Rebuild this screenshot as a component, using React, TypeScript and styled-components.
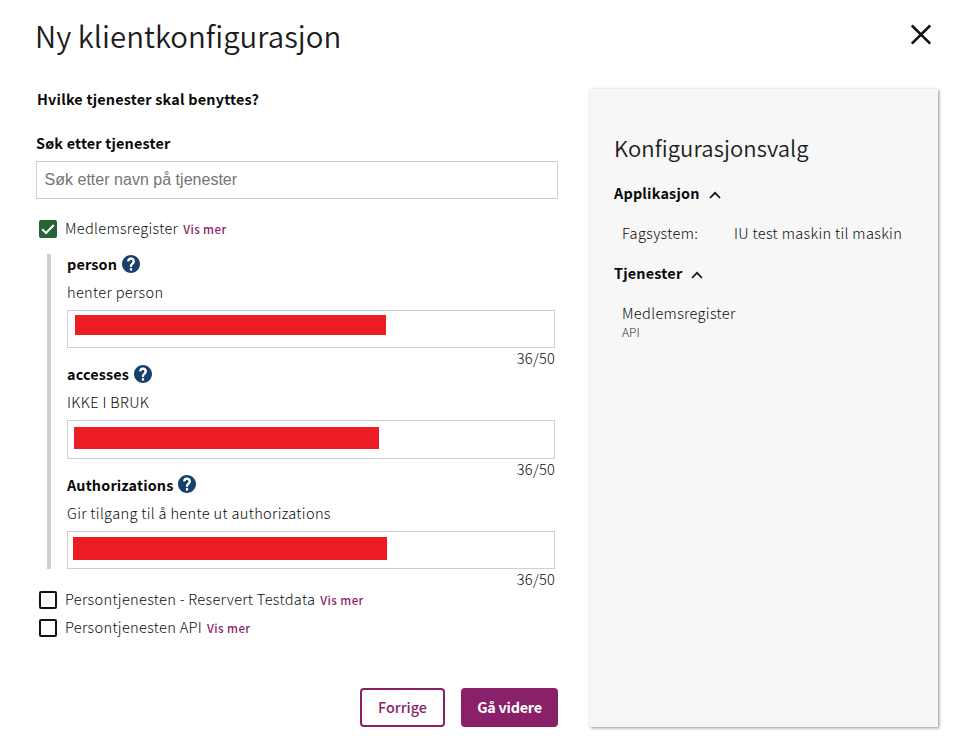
import React from "react";
import styled, { createGlobalStyle } from "styled-components";

const GlobalStyle = createGlobalStyle`
  *, *::before, *::after { box-sizing: border-box; }
  body {
    margin: 0;
    background: #fff;
    color: #0a0a0a;
    font-family: "Noto Sans CJK SC", "Noto Sans", sans-serif;
    font-size: 14.6px;
  }
  h1, h2, h3, p { margin: 0; font-weight: 400; }
`;

const Page = styled.main`
  width: 979px;
  height: 753px;
  overflow: hidden;
  padding: 15px 40px 0 36px;
`;

const Header = styled.header`
  display: flex;
  justify-content: space-between;
  height: 73px;
`;

const Title = styled.h1`
  margin: -2px 0 0 -1px;
  color: #1c1c1c;
  font-size: 29.4px;
  font-weight: 350;
  line-height: 44px;
  letter-spacing: 0.04px;
  white-space: nowrap;
`;

const CloseButton = styled.button`
  display: block;
  width: 36px;
  height: 36px;
  margin: 2px 0 0;
  padding: 0;
  border: 0;
  background: none;
`;

const Columns = styled.div`
  display: grid;
  grid-template-columns: 522px 348px;
  column-gap: 32px;
  align-items: start;
`;

const Form = styled.form`
  display: flex;
  flex-direction: column;
`;

const Question = styled.h2`
  margin-left: 1px;
  font-size: 14.4px;
  font-weight: 700;
  line-height: 22px;
  letter-spacing: 0.2px;
`;

const SearchLabel = styled.label`
  margin-top: 22px;
  font-size: 14.4px;
  font-weight: 700;
  line-height: 22px;
  letter-spacing: 0.17px;
`;

const SearchInput = styled.input`
  width: 100%;
  height: 38px;
  margin-top: 7px;
  padding: 0 7.5px;
  border: 1px solid #cfcfcf;
  font: 16px "Liberation Sans", Arial, sans-serif;
  letter-spacing: 0.02px;
  &::placeholder { color: #757575; opacity: 1; }
`;

const CheckRow = styled.div<{ $top: number }>`
  display: flex;
  align-items: center;
  height: 18px;
  margin-top: ${(p) => p.$top}px;
  padding-left: 3px;
  white-space: nowrap;
`;

const Box = styled.span<{ $checked?: boolean }>`
  display: flex;
  flex: none;
  width: 18px;
  height: 18px;
  border: 2px solid ${(p) => (p.$checked ? "#236534" : "#111")};
  border-radius: 2px;
  background: ${(p) => (p.$checked ? "#236534" : "#fff")};
`;

const CheckLabel = styled.span`
  margin: -2px 0 0 8px;
  font-weight: 300;
  line-height: 18px;
  letter-spacing: 0.31px;
`;

const MoreLink = styled.a`
  margin-left: 5px;
  color: #8a1f6a;
  font-size: 11.6px;
  font-weight: 500;
  line-height: 18px;
  letter-spacing: 0.4px;
`;

const ScopeGroup = styled.section`
  height: 315px;
  margin: 16px 3px 0 11px;
  padding-left: 16px;
  border-left: 4px solid #cfcfcf;
`;

const Scope = styled.div`
  height: 110.3px;
`;

const ScopeTitle = styled.h3`
  display: flex;
  align-items: center;
  height: 20px;
  font-size: 14.4px;
  font-weight: 700;
  line-height: 20px;
  letter-spacing: 0.15px;
`;

const HelpIcon = styled.svg`
  width: 18px;
  height: 18px;
  margin: 0 0 1px 4.5px;
`;

const ScopeText = styled.p`
  margin: 8px 0;
  font-weight: 300;
  line-height: 20px;
  letter-spacing: 0.33px;
`;

const ScopeField = styled.div<{ $top: number; $left: number; $height: number }>`
  height: ${(p) => p.$height}px;
  padding: ${(p) => p.$top}px 0 0 ${(p) => p.$left}px;
  border: 1px solid #cfcfcf;
`;

const Redaction = styled.div<{ $w: number; $h: number }>`
  width: ${(p) => p.$w}px;
  height: ${(p) => p.$h}px;
  background: #ed1c24;
`;

const Counter = styled.p`
  font-weight: 300;
  line-height: 20px;
  text-align: right;
  letter-spacing: 0.24px;
`;

const Actions = styled.div`
  display: flex;
  justify-content: flex-end;
  gap: 16px;
  margin-top: 51px;
`;

const Button = styled.button<{ $primary?: boolean }>`
  width: ${(p) => (p.$primary ? 97 : 85)}px;
  height: 39px;
  padding: 0 0 1px;
  border: 2px solid #8a1f6a;
  border-radius: 4px;
  background: ${(p) => (p.$primary ? "#8a1f6a" : "#fff")};
  color: ${(p) => (p.$primary ? "#fff" : "#8a1f6a")};
  font-family: inherit;
  font-size: 14.4px;
  font-weight: ${(p) => (p.$primary ? 700 : 500)};
  line-height: 34px;
  letter-spacing: ${(p) => (p.$primary ? -0.25 : 0)}px;
`;

const Summary = styled.aside`
  height: 638px;
  margin-top: 1px;
  padding: 41px 24px 0;
  background: #f7f7f7;
  box-shadow: 1px 1px 3px rgba(0, 0, 0, 0.45);
`;

const SummaryTitle = styled.h2`
  color: #1c1c1c;
  font-size: 22px;
  font-weight: 350;
  line-height: 34px;
  letter-spacing: 0.08px;
`;

const SummaryHeading = styled.h3<{ $top: number }>`
  display: flex;
  align-items: center;
  height: 20px;
  margin-top: ${(p) => p.$top}px;
  font-size: 14.4px;
  font-weight: 700;
  line-height: 20px;
  letter-spacing: 0.2px;
`;

const Chevron = styled.svg`
  width: 12px;
  height: 8px;
  margin: 3px 0 0 9px;
`;

const SummaryRow = styled.div`
  display: grid;
  grid-template-columns: 112px 1fr;
  margin: 20px 0 0 8px;
  font-weight: 300;
  line-height: 20px;
  letter-spacing: 0.34px;
  white-space: nowrap;
`;

const ServiceKind = styled.p`
  margin: 1px 0 0 8px;
  color: #333;
  font-size: 12px;
  font-weight: 300;
  line-height: 16px;
`;

const Help = () => (
  <HelpIcon viewBox="2 2 20 20">
    <path
      fill="#17406d"
      d="M12 2C6.48 2 2 6.48 2 12s4.48 10 10 10 10-4.48 10-10S17.52 2 12 2zm1 17h-2v-2h2v2zm2.07-7.75l-.9.92C13.45 12.9 13 13.5 13 15h-2v-.5c0-1.1.45-2.1 1.17-2.83l1.24-1.26c.37-.36.59-.86.59-1.41 0-1.1-.9-2-2-2s-2 .9-2 2H8c0-2.21 1.79-4 4-4s4 1.79 4 4c0 .88-.36 1.68-.93 2.25z"
    />
    <path
      fill="none"
      stroke="#fff"
      strokeWidth="2.5"
      d="M12 15v-.5c0-1 .4-1.6 1-2.2l1.2-1.2c.5-.5.8-1.2.8-2.1 0-1.6-1.3-3-3-3S9 7.400 9 9M12 16.800v2.400"
    />
  </HelpIcon>
);

const Caret = () => (
  <Chevron viewBox="0 0 12 8">
    <path d="M1 7 6 1.8 11 7" fill="none" stroke="#111" strokeWidth="1.7" />
  </Chevron>
);

const scopes = [
  { name: "person", text: "henter person", top: 4, left: 7, w: 311, h: 20, height: 38 },
  { name: "accesses", text: "IKKE I BRUK", top: 6, left: 6, w: 305, h: 22, height: 39 },
  { name: "Authorizations", text: "Gir tilgang til å hente ut authorizations", top: 5, left: 5, w: 314, h: 23, height: 38 },
];

export default function App() {
  return (
    <Page>
      <GlobalStyle />
      <Header>
        <Title>Ny klientkonfigurasjon</Title>
        <CloseButton aria-label="Lukk">
          <svg width="36" height="36" viewBox="0 0 36 36">
            <path d="M8.8 8.5 27.2 26.7M27.2 8.5 8.8 26.7" stroke="#111" strokeWidth="2.6" />
          </svg>
        </CloseButton>
      </Header>
      <Columns>
        <Form>
          <Question>Hvilke tjenester skal benyttes?</Question>
          <SearchLabel htmlFor="search">Søk etter tjenester</SearchLabel>
          <SearchInput id="search" placeholder="Søk etter navn på tjenester" />
          <CheckRow $top={21}>
            <Box $checked>
              <svg width="14" height="14" viewBox="0 0 14 14">
                <path d="M1.2 7.3 5 11 12.8 3" fill="none" stroke="#fff" strokeWidth="2" />
              </svg>
            </Box>
            <CheckLabel>Medlemsregister</CheckLabel>
            <MoreLink>Vis mer</MoreLink>
          </CheckRow>
          <ScopeGroup>
            {scopes.map((s) => (
              <Scope key={s.name}>
                <ScopeTitle>
                  {s.name}
                  <Help />
                </ScopeTitle>
                <ScopeText>{s.text}</ScopeText>
                <ScopeField $top={s.top} $left={s.left} $height={s.height}>
                  <Redaction $w={s.w} $h={s.h} />
                </ScopeField>
                <Counter>36/50</Counter>
              </Scope>
            ))}
          </ScopeGroup>
          <CheckRow $top={22}>
            <Box />
            <CheckLabel>Persontjenesten - Reservert Testdata</CheckLabel>
            <MoreLink>Vis mer</MoreLink>
          </CheckRow>
          <CheckRow $top={10}>
            <Box />
            <CheckLabel>Persontjenesten API</CheckLabel>
            <MoreLink>Vis mer</MoreLink>
          </CheckRow>
          <Actions>
            <Button type="button">Forrige</Button>
            <Button type="button" $primary>Gå videre</Button>
          </Actions>
        </Form>
        <Summary>
          <SummaryTitle>Konfigurasjonsvalg</SummaryTitle>
          <SummaryHeading $top={19}>
            Applikasjon
            <Caret />
          </SummaryHeading>
          <SummaryRow>
            <span>Fagsystem:</span>
            <span>IU test maskin til maskin</span>
          </SummaryRow>
          <SummaryHeading $top={20}>
            Tjenester
            <Caret />
          </SummaryHeading>
          <SummaryRow>
            <span>Medlemsregister</span>
          </SummaryRow>
          <ServiceKind>API</ServiceKind>
        </Summary>
      </Columns>
    </Page>
  );
}
